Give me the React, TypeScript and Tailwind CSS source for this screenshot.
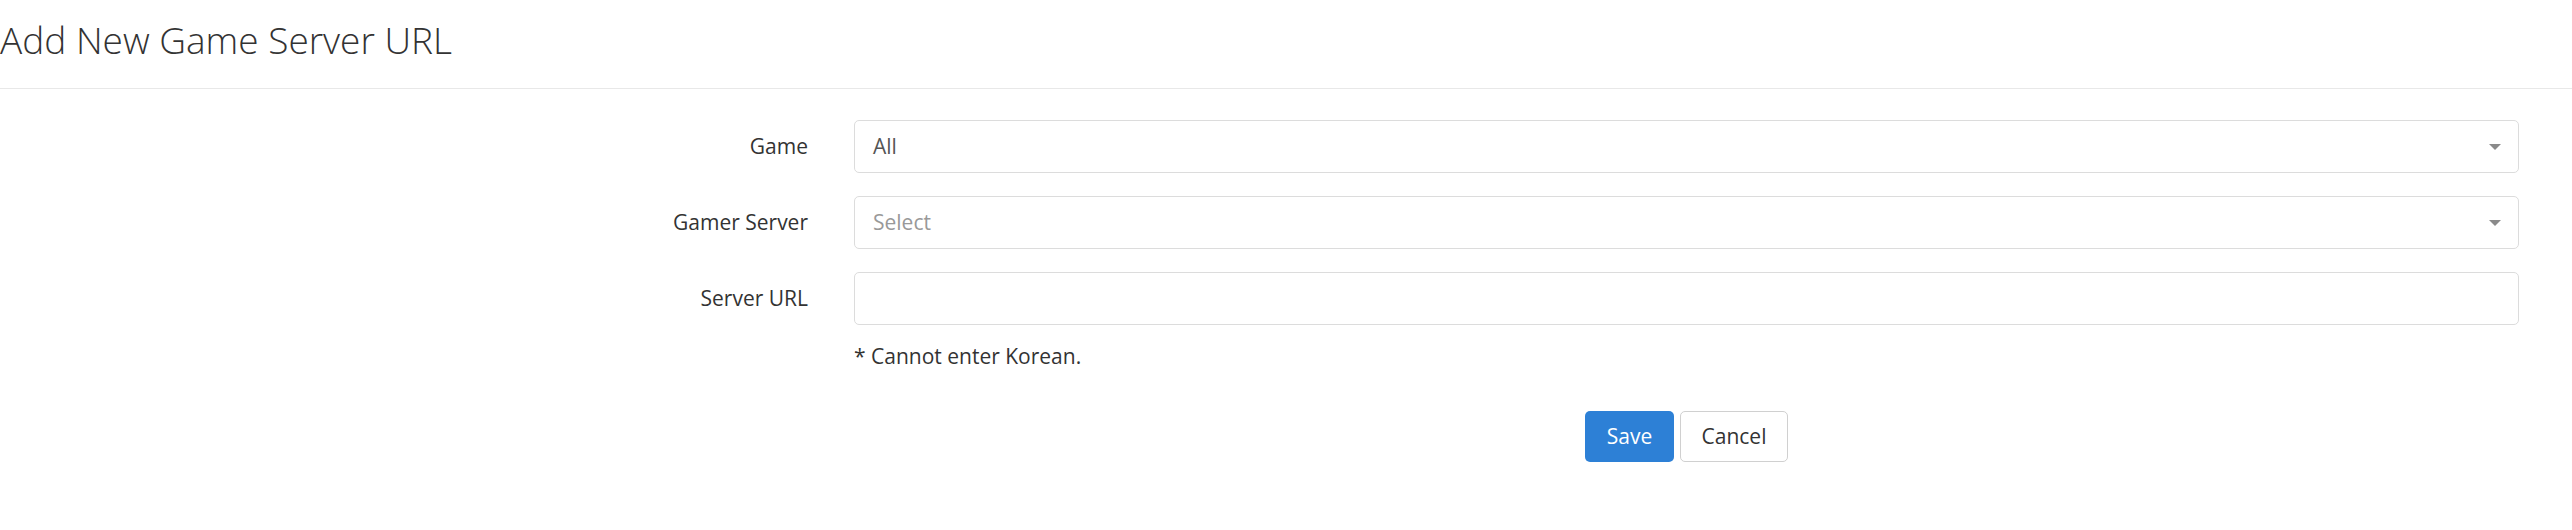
const font = { fontFamily: '"Open Sans", "Noto Sans", sans-serif' };

const Caret = () => (
  <svg width="12" height="6" viewBox="0 0 12 6" className="absolute right-[17px] top-1/2 -translate-y-1/2">
    <path d="M0 0h12L6 6z" fill="#8a8a8a" />
  </svg>
);

const Row = ({ label, children }: { label: string; children: React.ReactNode }) => (
  <div className="flex items-center">
    <label className="w-[808px] shrink-0 text-right text-[21px] text-[#333]">{label}</label>
    <div className="ml-[46px] flex-1">{children}</div>
  </div>
);

const App = () => {
  return (
    <div className="h-[530px] w-full bg-white" style={font}>
      <div className="h-[89px] border-b border-[#e8e8e8]">
        <h1 className="pt-[16px] text-[37px] font-light leading-[48px] text-[#333]">Add New Game Server URL</h1>
      </div>

      <div className="mr-[53px] pt-[31px]">
        <div className="flex flex-col gap-[23px]">
          <Row label="Game">
            <div className="relative flex h-[53px] items-center rounded-[5px] border border-[#dcdcdc] pl-[18px] text-[21px] text-[#555]">
              All
              <Caret />
            </div>
          </Row>
          <Row label="Gamer Server">
            <div className="relative flex h-[53px] items-center rounded-[5px] border border-[#dcdcdc] pl-[18px] text-[21px] text-[#999]">
              Select
              <Caret />
            </div>
          </Row>
          <Row label="Server URL">
            <input className="block h-[53px] w-full rounded-[5px] border border-[#dcdcdc] px-[18px] text-[21px] outline-none" />
          </Row>
        </div>

        <div className="ml-[854px]">
          <p className="mt-[16px] text-[21px] leading-[30px] text-[#333]">* Cannot enter Korean.</p>
          <div className="mt-[40px] flex justify-center gap-[6px]">
            <button className="h-[51px] w-[89px] rounded-[5px] bg-[#2d80d6] text-[21px] text-white">Save</button>
            <button className="h-[51px] w-[108px] rounded-[5px] border border-[#d0d0d0] bg-white text-[21px] text-[#333]">Cancel</button>
          </div>
        </div>
      </div>
    </div>
  );
};

export default App;
